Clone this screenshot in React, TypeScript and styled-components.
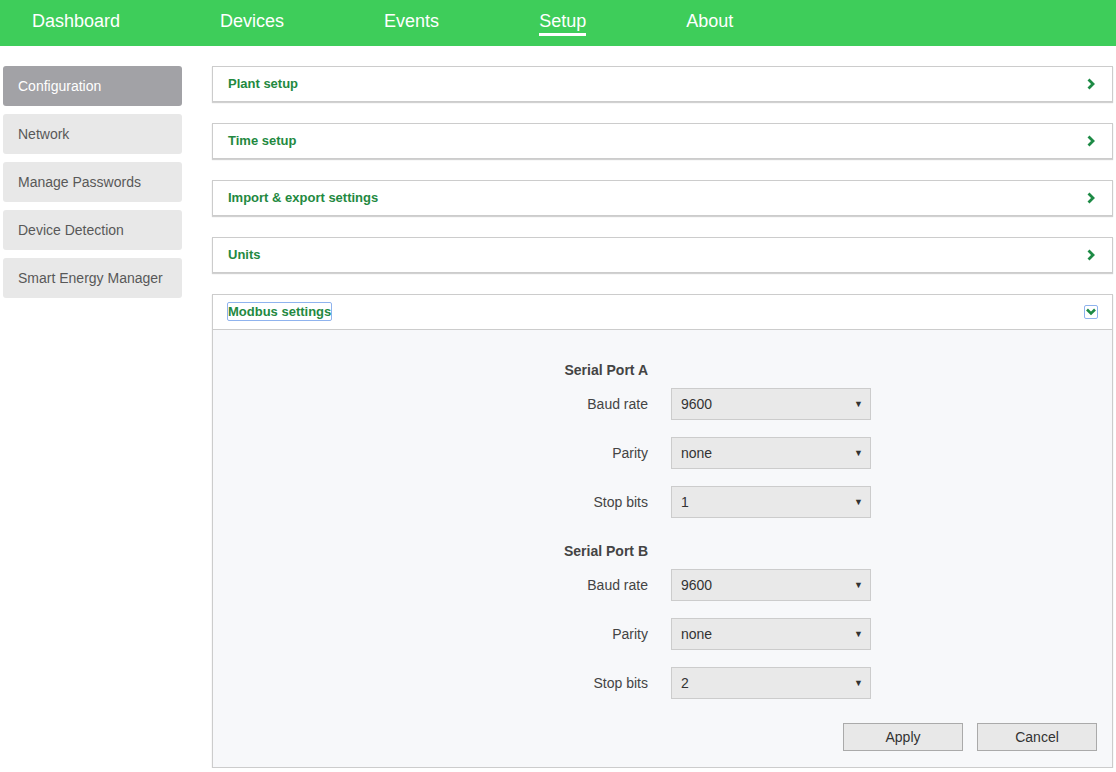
import React, { useState } from 'react';
import styled, { createGlobalStyle } from 'styled-components';

const GlobalStyle = createGlobalStyle`
    body {
        margin: 0;
        background: #fff;
        font-family: Arial, 'Liberation Sans', sans-serif;
    }
`;

const GREEN = '#3ecd5a';
const TITLE_GREEN = '#23893f';

const navItems = ['Dashboard', 'Devices', 'Events', 'Setup', 'About'];
const menuItems = ['Configuration', 'Network', 'Manage Passwords', 'Device Detection', 'Smart Energy Manager'];
const sections = ['Plant setup', 'Time setup', 'Import & export settings', 'Units'];

const ports = [
    { name: 'Serial Port A', baud: '9600', parity: 'none', stop: '1' },
    { name: 'Serial Port B', baud: '9600', parity: 'none', stop: '2' },
];

const Header = styled.header`
    display: flex;
    align-items: flex-start;
    gap: 100px;
    height: 46px;
    padding-left: 32px;
    background: ${GREEN};
`;

const NavLink = styled.a<{ $active?: boolean }>`
    margin-top: 11px;
    padding-bottom: 2px;
    font-size: 18px;
    line-height: 20px;
    color: #fff;
    cursor: pointer;
    border-bottom: 3px solid ${(p) => (p.$active ? '#fff' : 'transparent')};
`;

const Layout = styled.div`
    display: flex;
    align-items: flex-start;
    gap: 30px;
    padding: 20px 3px 0 3px;
`;

const Sidebar = styled.ul`
    display: flex;
    flex-direction: column;
    gap: 8px;
    width: 179px;
    margin: 0;
    padding: 0;
    list-style: none;
`;

const MenuItem = styled.li<{ $active?: boolean }>`
    height: 40px;
    line-height: 40px;
    padding-left: 15px;
    border-radius: 3px;
    font-size: 14px;
    color: ${(p) => (p.$active ? '#fff' : '#585858')};
    background: ${(p) => (p.$active ? '#a2a2a6' : '#e8e8e8')};
`;

const Main = styled.main`
    flex: 1;
    display: flex;
    flex-direction: column;
    gap: 21px;
`;

const Panel = styled.section`
    border: 1px solid #ccc;
    box-shadow: 0 1px 1px rgba(0, 0, 0, 0.18);
    background: #fff;
`;

const PanelHeader = styled.div`
    display: flex;
    align-items: center;
    justify-content: space-between;
    height: 34px;
    padding: 0 15px 1px 15px;
    box-sizing: border-box;
`;

const PanelTitle = styled.span<{ $focused?: boolean }>`
    font-size: 13px;
    font-weight: bold;
    color: ${TITLE_GREEN};
    margin-left: ${(p) => (p.$focused ? '-1px' : '0')};
    border: ${(p) => (p.$focused ? '1px solid #8fb3ee' : 'none')};
    border-radius: 2px;
    line-height: 17px;
`;

const ToggleBox = styled.span<{ $focused?: boolean }>`
    display: flex;
    align-items: center;
    justify-content: center;
    width: 14px;
    height: 14px;
    margin-right: -1px;
    border: 1px solid ${(p) => (p.$focused ? '#8fb3ee' : 'transparent')};
    border-radius: 2px;
    box-sizing: border-box;
`;

const PanelBody = styled.div`
    border-top: 1px solid #ccc;
    background: #f7f8fa;
    padding: 30px 15px 16px 0;
`;

const FormGrid = styled.div`
    display: grid;
    grid-template-columns: 435px 200px;
    column-gap: 23px;
    align-items: center;
`;

const PortTitle = styled.div<{ $first?: boolean }>`
    grid-column: 1;
    text-align: right;
    font-size: 14px;
    font-weight: bold;
    color: #444;
    line-height: 20px;
    margin: ${(p) => (p.$first ? '0' : '23px')} 0 8px;
`;

const Label = styled.label<{ $last?: boolean }>`
    grid-column: 1;
    text-align: right;
    font-size: 14px;
    color: #444;
    margin-bottom: ${(p) => (p.$last ? '0' : '17px')};
`;

const SelectBox = styled.div<{ $last?: boolean }>`
    grid-column: 2;
    position: relative;
    height: 32px;
    margin-bottom: ${(p) => (p.$last ? '0' : '17px')};
    box-sizing: border-box;
    border: 1px solid #ccc;
    background: #e9e9e9;
    font-size: 14px;
    line-height: 30px;
    color: #333;
    padding-left: 9px;
`;

const Caret = styled.span`
    position: absolute;
    right: 7px;
    top: 0;
    font-size: 9px;
    color: #333;
`;

const Actions = styled.div`
    display: flex;
    justify-content: flex-end;
    gap: 14px;
    margin-top: 24px;
`;

const Button = styled.button`
    width: 120px;
    height: 28px;
    border: 1px solid #aaa;
    border-radius: 0;
    background: #e8e8e8;
    font-family: Arial, 'Liberation Sans', sans-serif;
    font-size: 14px;
    color: #333;
`;

const ChevronRight = () => (
    <svg width="10" height="12" viewBox="0 0 10 12">
        <polyline points="2.5,1.5 7,6 2.5,10.5" fill="none" stroke="#1d8a45" strokeWidth="2.8" />
    </svg>
);

const ChevronDown = () => (
    <svg width="10" height="8" viewBox="0 0 10 8">
        <polyline points="1,1.5 5,5.5 9,1.5" fill="none" stroke="#1d8a45" strokeWidth="2.6" />
    </svg>
);

const Field = ({ label, value, last }: { label: string; value: string; last?: boolean }) => (
    <>
        <Label $last={last}>{label}</Label>
        <SelectBox $last={last}>
            {value}
            <Caret>▼</Caret>
        </SelectBox>
    </>
);

export default function App() {
    const [active] = useState('Setup');

    return (
        <>
            <GlobalStyle />
            <Header>
                {navItems.map((item) => (
                    <NavLink key={item} $active={item === active}>
                        {item}
                    </NavLink>
                ))}
            </Header>
            <Layout>
                <Sidebar>
                    {menuItems.map((item, i) => (
                        <MenuItem key={item} $active={i === 0}>
                            {item}
                        </MenuItem>
                    ))}
                </Sidebar>
                <Main>
                    {sections.map((s) => (
                        <Panel key={s}>
                            <PanelHeader>
                                <PanelTitle>{s}</PanelTitle>
                                <ToggleBox>
                                    <ChevronRight />
                                </ToggleBox>
                            </PanelHeader>
                        </Panel>
                    ))}
                    <Panel>
                        <PanelHeader>
                            <PanelTitle $focused>Modbus settings</PanelTitle>
                            <ToggleBox $focused>
                                <ChevronDown />
                            </ToggleBox>
                        </PanelHeader>
                        <PanelBody>
                            <FormGrid>
                                {ports.map((port, i) => (
                                    <React.Fragment key={port.name}>
                                        <PortTitle $first={i === 0}>{port.name}</PortTitle>
                                        <Field label="Baud rate" value={port.baud} />
                                        <Field label="Parity" value={port.parity} />
                                        <Field label="Stop bits" value={port.stop} last />
                                    </React.Fragment>
                                ))}
                            </FormGrid>
                            <Actions>
                                <Button>Apply</Button>
                                <Button>Cancel</Button>
                            </Actions>
                        </PanelBody>
                    </Panel>
                </Main>
            </Layout>
        </>
    );
}
